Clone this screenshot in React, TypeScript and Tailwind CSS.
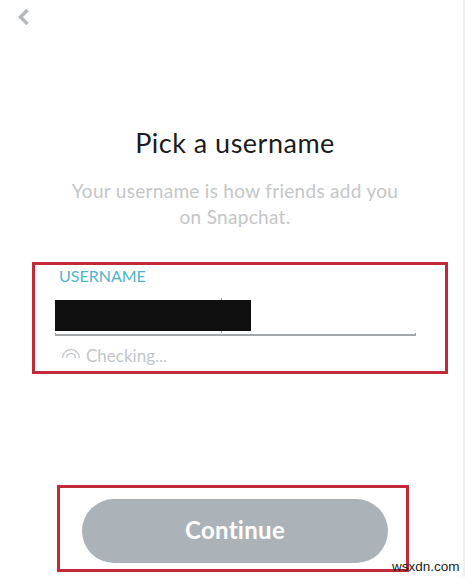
import React from 'react';

const font = "font-['Lato','Open_Sans',sans-serif]";

const BackIcon = () => (
  <svg width="14" height="18" viewBox="0 0 14 18" fill="none">
    <path d="M11.5 2 L4.5 9 L11.5 16" stroke="#b4b8bb" strokeWidth="3.4" strokeLinejoin="miter" />
  </svg>
);

const Spinner = () => (
  <svg width="20" height="14" viewBox="0 0 20 14" fill="none" stroke="#c6c9cc" strokeWidth="1.4">
    <path d="M1.5 12 A8.5 8.5 0 0 1 18.5 12" />
    <path d="M5.5 12 A4.5 4.5 0 0 1 14.5 12" />
  </svg>
);

const UsernameField = () => (
  <div className="mt-[32px] ml-[32px] w-[416px] h-[112px] border-[3px] border-[#c22a37] pl-[20px] pr-[29px] box-border">
    <div className="ml-[4px] text-[16px] leading-[18px] mt-[2px] text-[#4fb4c9]">USERNAME</div>
    <div className="relative mt-[15px] w-[196px] h-[31px] bg-[#0f0f0f]">
      {/* text cursor sticking out behind the black bar */}
      <div className="absolute left-[166px] top-[-2px] bottom-[-2px] w-[1px] bg-[#7fa9b0] -z-10" />
    </div>
    <div className="mt-[2px] h-[3px] w-full border-b-2 border-x border-[#a3a7aa]" />
    <div className="mt-[10px] ml-[6px] flex items-center gap-[5px] text-[17px] leading-[20px] text-[#c3c6c9]">
      <div className="mb-[6px]">
        <Spinner />
      </div>
      <span>Checking...</span>
    </div>
  </div>
);

export default function App() {
  return (
    <div className={`${font} relative isolate w-[465px] h-[577px] bg-white overflow-hidden border-r-2 border-[#eeeeee] box-border`}>
      <div className="pt-[8px] pl-[16px] h-[125px]">
        <BackIcon />
      </div>

      <h1 className="pl-[7px] text-center text-[27px] leading-[36px] tracking-[0.5px] text-[#1c1c1c] font-normal">
        Pick a username
      </h1>
      <p className="pl-[7px] mt-[17px] text-center text-[19px] leading-[26px] tracking-[0.3px] text-[#c4c6c8]">
        Your username is how friends add you
        <br />
        on Snapchat.
      </p>

      <UsernameField />

      <div className="mt-[111px] ml-[57px] w-[352px] h-[87px] border-[3px] border-[#c22a37] box-border flex items-center pl-[22px] pt-[4px]">
        <button className="w-[306px] h-[64px] pb-[2px] rounded-full bg-[#abb3b9] text-white text-[24px] font-bold tracking-[0.3px]">
          Continue
        </button>
      </div>

      <span className="absolute left-[392px] top-[558px] font-['Liberation_Sans',sans-serif] text-[13.5px] leading-[18px] text-[#222222]">
        wsxdn.com
      </span>
    </div>
  );
}
